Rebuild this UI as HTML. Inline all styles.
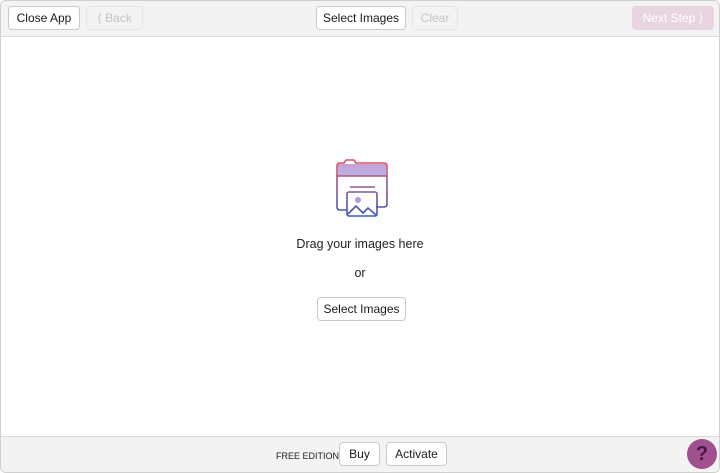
<!DOCTYPE html><html><head><style>
body{margin:0;width:720px;height:473px;overflow:hidden;font-family:"Liberation Sans",sans-serif;background:#fff}
.win{position:absolute;left:0;top:0;width:718px;height:471px;border:1px solid #cfcfcf;border-radius:6px;overflow:hidden;background:#fff}
.top{position:absolute;left:0;top:0;right:0;height:35px;background:#f3f3f3;border-bottom:1px solid #dcdcdc}
.bot{position:absolute;left:0;bottom:0;right:0;height:35px;background:#f3f3f3;border-top:1px solid #dcdcdc}
.b{position:absolute;line-height:22px;border:1px solid #c9c9c9;border-radius:4px;background:#fff;font-size:12px;color:#1a1a1a;text-align:center;box-sizing:border-box;height:24px}
.d{border-color:#e6e6e6;background:#f3f3f3;color:#c4c4c4}
.t{position:absolute;width:100%;text-align:center;font-size:12.5px;color:#222}
</style></head><body><div class="win">
<div class="top">
<div class="b" style="left:7px;top:5px;width:72px">Close App</div>
<div class="b d" style="left:85px;top:5px;width:57px">&#10216; Back</div>
<div class="b" style="left:315px;top:5px;width:90px">Select Images</div>
<div class="b d" style="left:411px;top:5px;width:46px">Clear</div>
<div class="b" style="left:631px;top:5px;width:82px;background:#e8d5e1;border-color:#e8d5e1;color:#fff">Next Step &#10217;</div>
</div>
<svg style="position:absolute;left:330px;top:154px" width="62" height="66" viewBox="330 154 62 66">
<defs><linearGradient id="g" gradientUnits="userSpaceOnUse" x1="0" y1="159" x2="0" y2="215"><stop offset="0" stop-color="#e0525e"/><stop offset="1" stop-color="#3b57c4"/></linearGradient>
<linearGradient id="f" x1="0" y1="0" x2="0" y2="1"><stop offset="0" stop-color="#c9a0d8"/><stop offset="1" stop-color="#b6b2e6"/></linearGradient></defs>
<path d="M337 163h48v12h-48z" fill="url(#f)"/>
<g fill="none" stroke="url(#g)" stroke-width="1.6" stroke-linejoin="round">
<path d="M336 206V165q0-3 3-3h4l2-3h8l2 3h28q3 0 3 3v38q0 3-3 3h-8M346 209h-7q-3 0-3-3"/>
<path d="M336 175h50"/><path d="M349 186h25"/>
<rect x="346" y="191" width="30" height="24" rx="2"/>
<path d="M347 213l8-8 7 7 5-5 8 7"/></g>
<circle cx="357" cy="199" r="3" fill="#b69ad8"/>
</svg>
<div class="t" style="top:236px">Drag your images here</div>
<div class="t" style="top:265px">or</div>
<div class="b" style="left:316px;top:296px;width:89px">Select Images</div>
<div class="bot">
<span style="position:absolute;left:275px;top:14px;font-size:9px;color:#222">FREE EDITION</span>
<div class="b" style="left:338px;top:5px;width:41px">Buy</div>
<div class="b" style="left:385px;top:5px;width:61px">Activate</div>
<div style="position:absolute;left:686px;top:2px;width:30px;height:30px;border-radius:50%;background:#a0508f;color:#4a1840;font-weight:bold;font-size:20px;text-align:center;line-height:30px">?</div>
</div>
</div></body></html>
